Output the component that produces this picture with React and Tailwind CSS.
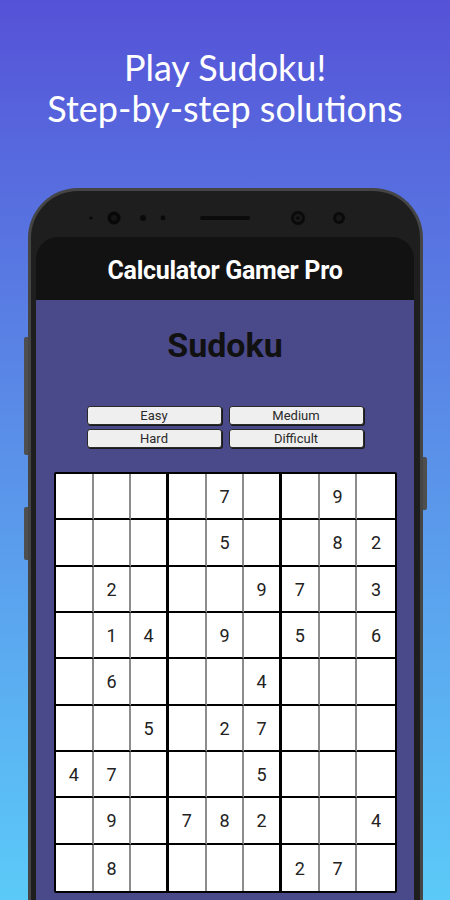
import React from "react";

const grid = [
  [0, 0, 0, 0, 7, 0, 0, 9, 0],
  [0, 0, 0, 0, 5, 0, 0, 8, 2],
  [0, 2, 0, 0, 0, 9, 7, 0, 3],
  [0, 1, 4, 0, 9, 0, 5, 0, 6],
  [0, 6, 0, 0, 0, 4, 0, 0, 0],
  [0, 0, 5, 0, 2, 7, 0, 0, 0],
  [4, 7, 0, 0, 0, 5, 0, 0, 0],
  [0, 9, 0, 7, 8, 2, 0, 0, 4],
  [0, 8, 0, 0, 0, 0, 2, 7, 0],
];

function CameraStrip() {
  return (
    <svg width="389" height="46" viewBox="0 0 389 46" className="block">
      <circle cx={60} cy={27} r={1.6} fill="#080808" />
      <circle cx={83} cy={27} r={6.5} fill="#080808" />
      <circle cx={83} cy={27} r={3} fill="#151515" />
      <circle cx={112} cy={27} r={3} fill="#0a0a0a" />
      <circle cx={132} cy={27} r={2.4} fill="#0a0a0a" />
      <rect x={169} y={25} width={50} height={4} rx={2} fill="#0b0b0b" />
      <circle cx={267} cy={27} r={7} fill="#0a0a0a" />
      <circle cx={267} cy={27} r={4} fill="#1a1a1a" />
      <circle cx={267} cy={27} r={1.8} fill="#0a0a0a" />
      <circle cx={308} cy={27} r={6} fill="#0a0a0a" />
      <circle cx={308} cy={27} r={3} fill="#181818" />
    </svg>
  );
}

function Btn({ children }) {
  return (
    <div className="h-[19px] w-[135px] rounded-[3px] border border-[#2a2a2a] bg-[#efefef] shadow-[1px_1px_0_#1a1a1a] flex items-center justify-center text-[13px] leading-none text-[#2a2a2a] font-['Roboto',sans-serif]">
      {children}
    </div>
  );
}

export default function App() {
  return (
    <div className="w-[450px] h-[900px] overflow-hidden bg-linear-to-b from-[#5552d7] to-[#5bcaf8]">
      <div className="pt-[47px] text-center text-white text-[36px] leading-[41px] font-['Lato',sans-serif]">
        <div>Play Sudoku!</div>
        <div>Step-by-step solutions</div>
      </div>

      <div className="relative ml-[28px] mt-[59px] w-[395px]">
        <div className="absolute left-[-4px] top-[149px] h-[118px] w-[4px] rounded-l-[2px] bg-[#4e4e4e]" />
        <div className="absolute left-[-4px] top-[319px] h-[53px] w-[4px] rounded-l-[2px] bg-[#4e4e4e]" />
        <div className="absolute right-[-4px] top-[269px] h-[53px] w-[4px] rounded-r-[2px] bg-[#4e4e4e]" />

        <div className="h-[760px] rounded-t-[50px] border-[3px] border-b-0 border-[#454545] bg-[#1e1e1e] pl-[5px] pr-[6px]">
          <div className="-ml-[5px] -mr-[6px]">
            <CameraStrip />
          </div>
          <div className="h-[63px] rounded-t-[22px] bg-[#121212] flex items-center justify-center pt-[5px]">
            <span className="text-white text-[25px] font-bold tracking-[-0.3px] font-['Roboto',sans-serif]">
              Calculator Gamer Pro
            </span>
          </div>
          <div className="h-[700px] bg-[#4a4a8b] flex flex-col items-center pt-[28px]">
            <div className="text-[34px] leading-none font-bold text-[#111] font-['Roboto',sans-serif]">
              Sudoku
            </div>
            <div className="mt-[44px] grid grid-cols-2 gap-x-[7px] gap-y-[4px]">
              <Btn>Easy</Btn>
              <Btn>Medium</Btn>
              <Btn>Hard</Btn>
              <Btn>Difficult</Btn>
            </div>
            <div className="mt-[24px] ml-[1px] w-[343px] h-[421px] rounded-[2px] border-2 border-black bg-white grid grid-cols-9 grid-rows-9 font-['Roboto',sans-serif]">
              {grid.map((row, r) =>
                row.map((v, c) => (
                  <div
                    key={`${r}-${c}`}
                    className={`flex items-center justify-center pt-[2px] text-[18px] leading-none text-[#222] ${
                      c === 8
                        ? ""
                        : c === 2 || c === 5
                        ? "border-r-[3px] border-r-black"
                        : "border-r-2 border-r-[#8c8c8c]"
                    } ${r === 8 ? "" : "border-b-2 border-b-black"}`}
                  >
                    {v ? v : ""}
                  </div>
                ))
              )}
            </div>
          </div>
        </div>
      </div>
    </div>
  );
}
